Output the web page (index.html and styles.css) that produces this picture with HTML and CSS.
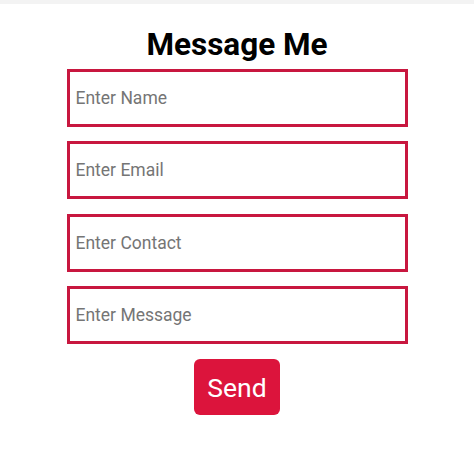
FILE: index.html
```html
<!DOCTYPE html>
<html lang="en">
<head>
<meta charset="utf-8">
<title>Message Me</title>
<link rel="stylesheet" href="styles.css">
</head>
<body>
<div class="topbar"></div>
<main class="contact">
  <h1 class="title">Message Me</h1>
  <form class="form">
    <input class="field" type="text" placeholder="Enter Name">
    <input class="field" type="email" placeholder="Enter Email">
    <input class="field" type="text" placeholder="Enter Contact">
    <input class="field" type="text" placeholder="Enter Message">
    <button class="send" type="button">Send</button>
  </form>
</main>
</body>
</html>
```

FILE: styles.css
```css
html, body {
  margin: 0;
  padding: 0;
  background: #ffffff;
  font-family: Roboto, "Liberation Sans", Arial, sans-serif;
}

.topbar {
  height: 4px;
  background: #f3f3f3;
}

.contact {
  width: 341px;
  margin: 0 auto;
  display: flex;
  flex-direction: column;
  align-items: stretch;
}

.title {
  margin: 22px 0 5.5px;
  font-size: 31.5px;
  line-height: 37px;
  font-weight: 700;
  color: #000000;
  text-align: center;
}

.form {
  display: flex;
  flex-direction: column;
  gap: 14.5px;
  align-items: stretch;
}

.field {
  box-sizing: border-box;
  height: 58px;
  margin: 0;
  padding: 0 6px;
  border: 3px solid #c8173f;
  border-radius: 0;
  background: #ffffff;
  font-family: Roboto, "Liberation Sans", Arial, sans-serif;
  font-size: 17.5px;
  color: #333333;
  outline: none;
}

.field::placeholder {
  color: #757575;
  opacity: 1;
}

.send {
  align-self: center;
  box-sizing: border-box;
  width: 86px;
  height: 56px;
  margin-top: 0.5px;
  padding: 0;
  border: none;
  border-radius: 6px;
  background: #dc143c;
  color: #ffffff;
  font-family: Roboto, "Liberation Sans", Arial, sans-serif;
  font-size: 26.5px;
  cursor: pointer;
}
```
